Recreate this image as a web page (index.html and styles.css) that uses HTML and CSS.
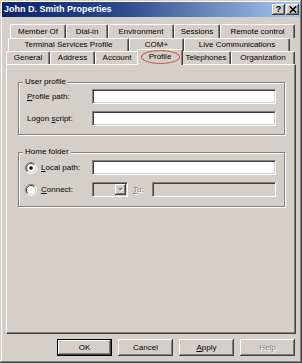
FILE: index.html
```html
<!DOCTYPE html>
<html>
<head>
<meta charset="utf-8">
<title>John D. Smith Properties</title>
<link rel="stylesheet" href="styles.css">
</head>
<body>
<div class="window">
  <div class="titlebar">
    <span class="title">John D. Smith Properties</span>
    <div class="caption-btns">
      <span class="cbtn">?</span>
      <span class="cbtn"><svg width="8" height="7" viewBox="0 0 8 7"><path d="M0.8 0.5 L7.2 6.5 M7.2 0.5 L0.8 6.5" stroke="#000" stroke-width="1.6" fill="none"/></svg></span>
    </div>
  </div>
  <div class="content">
    <div class="tabs">
      <div class="row row1">
        <div class="tab">Member Of</div>
        <div class="tab">Dial-in</div>
        <div class="tab">Environment</div>
        <div class="tab">Sessions</div>
        <div class="tab">Remote control</div>
      </div>
      <div class="row row2">
        <div class="tab">Terminal Services Profile</div>
        <div class="tab">COM+</div>
        <div class="tab">Live Communications</div>
      </div>
      <div class="row row3">
        <div class="tab">General</div>
        <div class="tab">Address</div>
        <div class="tab">Account</div>
        <div class="tab active">Profile<span class="mark"></span></div>
        <div class="tab">Telephones</div>
        <div class="tab">Organization</div>
      </div>
    </div>
    <div class="panel">
      <div class="group group-user">
        <span class="group-title">User profile</span>
        <div class="field">
          <span class="label"><u>P</u>rofile path:</span>
          <div class="input"></div>
        </div>
        <div class="field">
          <span class="label">Logon <u>s</u>cript:</span>
          <div class="input"></div>
        </div>
      </div>
      <div class="group group-home">
        <span class="group-title">Home folder</span>
        <div class="field radio-field">
          <span class="radio-label">
            <svg class="radio" width="12" height="12" viewBox="0 0 12 12">
              <circle cx="6" cy="6" r="5" fill="#fff"/>
              <path d="M9.9 2.1 A5.5 5.5 0 0 0 2.1 9.9" stroke="#808080" fill="none"/>
              <path d="M2.1 9.9 A5.5 5.5 0 0 0 9.9 2.1" stroke="#fff" fill="none"/>
              <path d="M9.2 2.8 A4.5 4.5 0 0 0 2.8 9.2" stroke="#404040" fill="none"/>
              <path d="M2.8 9.2 A4.5 4.5 0 0 0 9.2 2.8" stroke="#d4d0c8" fill="none"/>
              <circle cx="6" cy="6" r="1.8" fill="#000"/>
            </svg>
            <span><u>L</u>ocal path:</span>
          </span>
          <div class="input"></div>
        </div>
        <div class="field connect-field">
          <span class="radio-label">
            <svg class="radio" width="12" height="12" viewBox="0 0 12 12">
              <circle cx="6" cy="6" r="5" fill="#fff"/>
              <path d="M9.9 2.1 A5.5 5.5 0 0 0 2.1 9.9" stroke="#808080" fill="none"/>
              <path d="M2.1 9.9 A5.5 5.5 0 0 0 9.9 2.1" stroke="#fff" fill="none"/>
              <path d="M9.2 2.8 A4.5 4.5 0 0 0 2.8 9.2" stroke="#404040" fill="none"/>
              <path d="M2.8 9.2 A4.5 4.5 0 0 0 9.2 2.8" stroke="#d4d0c8" fill="none"/>
            </svg>
            <span><u>C</u>onnect:</span>
          </span>
          <div class="input disabled combo">
            <span class="combo-btn"><svg width="5" height="4" viewBox="0 0 5 4"><path d="M1 1 H6 L3.5 3.5 Z" fill="#fff"/><path d="M0 0 H5 L2.5 2.5 Z" fill="#808080"/></svg></span>
          </div>
          <span class="disabled-text"><u>T</u>o:</span>
          <div class="input disabled"></div>
        </div>
      </div>
    </div>
    <div class="buttons">
      <div class="btn default"><span>OK</span></div>
      <div class="btn">Cancel</div>
      <div class="btn"><span><u>A</u>pply</span></div>
      <div class="btn"><span class="disabled-text">Help</span></div>
    </div>
  </div>
</div>
</body>
</html>
```
FILE: styles.css
```css
* { box-sizing: border-box; }
html, body { margin: 0; padding: 0; }
body {
  width: 302px;
  height: 363px;
  overflow: hidden;
  background: #d4d0c8;
  font-family: "Liberation Sans", Arial, sans-serif;
  font-size: 8px;
  line-height: 10px;
  color: #000;
}
u { text-decoration: underline; text-underline-offset: 1px; }

.window {
  width: 302px;
  height: 363px;
  padding: 2px;
  display: flex;
  flex-direction: column;
  background: #d4d0c8;
  box-shadow: inset -1px -1px 0 #404040, inset 1px 1px 0 #d4d0c8,
              inset -2px -2px 0 #808080, inset 2px 2px 0 #fff;
}

.titlebar {
  flex: none;
  height: 15px;
  display: flex;
  align-items: center;
  justify-content: space-between;
  padding: 0 1px 0 2px;
  background: linear-gradient(90deg, #0a246a 0%, #2a4a8a 40%, #a6caf0 100%);
}
.title { color: #fff; font-weight: bold; font-size: 9px; line-height: 11px; }
.caption-btns { display: flex; gap: 1px; }
.cbtn {
  width: 13px;
  height: 11px;
  display: flex;
  align-items: center;
  justify-content: center;
  background: #d4d0c8;
  font-weight: bold;
  font-size: 9px;
  line-height: 9px;
  box-shadow: inset -1px -1px 0 #404040, inset 1px 1px 0 #fff, inset -2px -2px 0 #808080;
}

.content {
  flex: 1;
  display: flex;
  flex-direction: column;
  padding: 7px 4px 0;
}

.tabs { display: flex; flex-direction: column; }
.row { display: grid; }
.row1 { height: 14px; padding-left: 4px; grid-template-columns: 56px 42px 66px 46px 75px; }
.row2 { height: 13px; padding-left: 2px; grid-template-columns: 121px 55px 106px; }
.row3 { height: 13px; grid-template-columns: 44px 45px 44px 42px 50px 64px; }

.tab {
  display: flex;
  align-items: center;
  justify-content: center;
  white-space: nowrap;
  background: #d4d0c8;
  border-top: 1px solid #fff;
  border-left: 1px solid #fff;
  border-right: 1px solid #404040;
  border-radius: 2px 2px 0 0;
  box-shadow: inset -1px 0 0 #808080;
}
.tab.active {
  position: relative;
  z-index: 1;
  margin: -2px -2px -1px;
  padding-bottom: 1px;
}
.mark {
  position: absolute;
  left: 3px;
  right: 2px;
  top: 0;
  bottom: 1px;
  border: 1px solid #d0504c;
  border-radius: 50%;
}

.panel {
  flex: none;
  height: 270px;
  border: 1px solid;
  border-color: #fff #404040 #404040 #fff;
  box-shadow: inset -1px -1px 0 #808080;
  padding: 17px 10px 0 11px;
  display: flex;
  flex-direction: column;
  gap: 17px;
}

.group {
  position: relative;
  border: 1px solid #808080;
  box-shadow: inset 1px 1px 0 #fff, 1px 1px 0 #fff;
  display: flex;
  flex-direction: column;
  gap: 7px;
}
.group-user { padding: 6px 8px 8px 8px; }
.group-home { padding: 7px 8px 9px 6px; }
.group-title {
  position: absolute;
  top: -6px;
  left: 4px;
  padding: 0 2px;
  background: #d4d0c8;
  line-height: 10px;
}

.field {
  display: grid;
  grid-template-columns: 65px 1fr;
  align-items: center;
  height: 15px;
}
.radio-field { grid-template-columns: 67px 1fr; }
.connect-field { grid-template-columns: 67px 36px 24px 1fr; }
.radio-label { display: flex; align-items: center; gap: 4px; }
.radio { display: block; flex: none; }

.input {
  height: 15px;
  background: #fff;
  border: 1px solid;
  border-color: #808080 #fff #fff #808080;
  box-shadow: inset 1px 1px 0 #404040, inset -1px -1px 0 #d4d0c8;
}
.input.disabled { background: #d4d0c8; }
.combo { display: flex; justify-content: flex-end; padding: 1px; }
.connect-field .disabled-text { padding-left: 5px; }
.combo-btn {
  width: 11px;
  height: 11px;
  display: flex;
  align-items: center;
  justify-content: center;
  background: #d4d0c8;
  box-shadow: inset -1px -1px 0 #404040, inset 1px 1px 0 #fff, inset -2px -2px 0 #808080;
}
.combo-btn svg { display: block; overflow: visible; }

.disabled-text { color: #808080; text-shadow: 1px 1px 0 #fff; }

.buttons {
  flex: none;
  display: flex;
  justify-content: flex-end;
  gap: 6px;
  margin-top: 5px;
  padding-right: 1px;
}
.btn {
  width: 55px;
  height: 17px;
  display: flex;
  align-items: center;
  justify-content: center;
  background: #d4d0c8;
  box-shadow: inset -1px -1px 0 #404040, inset 1px 1px 0 #fff, inset -2px -2px 0 #808080;
}
.btn.default {
  border: 1px solid #000;
  box-shadow: inset -1px -1px 0 #404040, inset 1px 1px 0 #fff, inset -2px -2px 0 #808080;
}
```
